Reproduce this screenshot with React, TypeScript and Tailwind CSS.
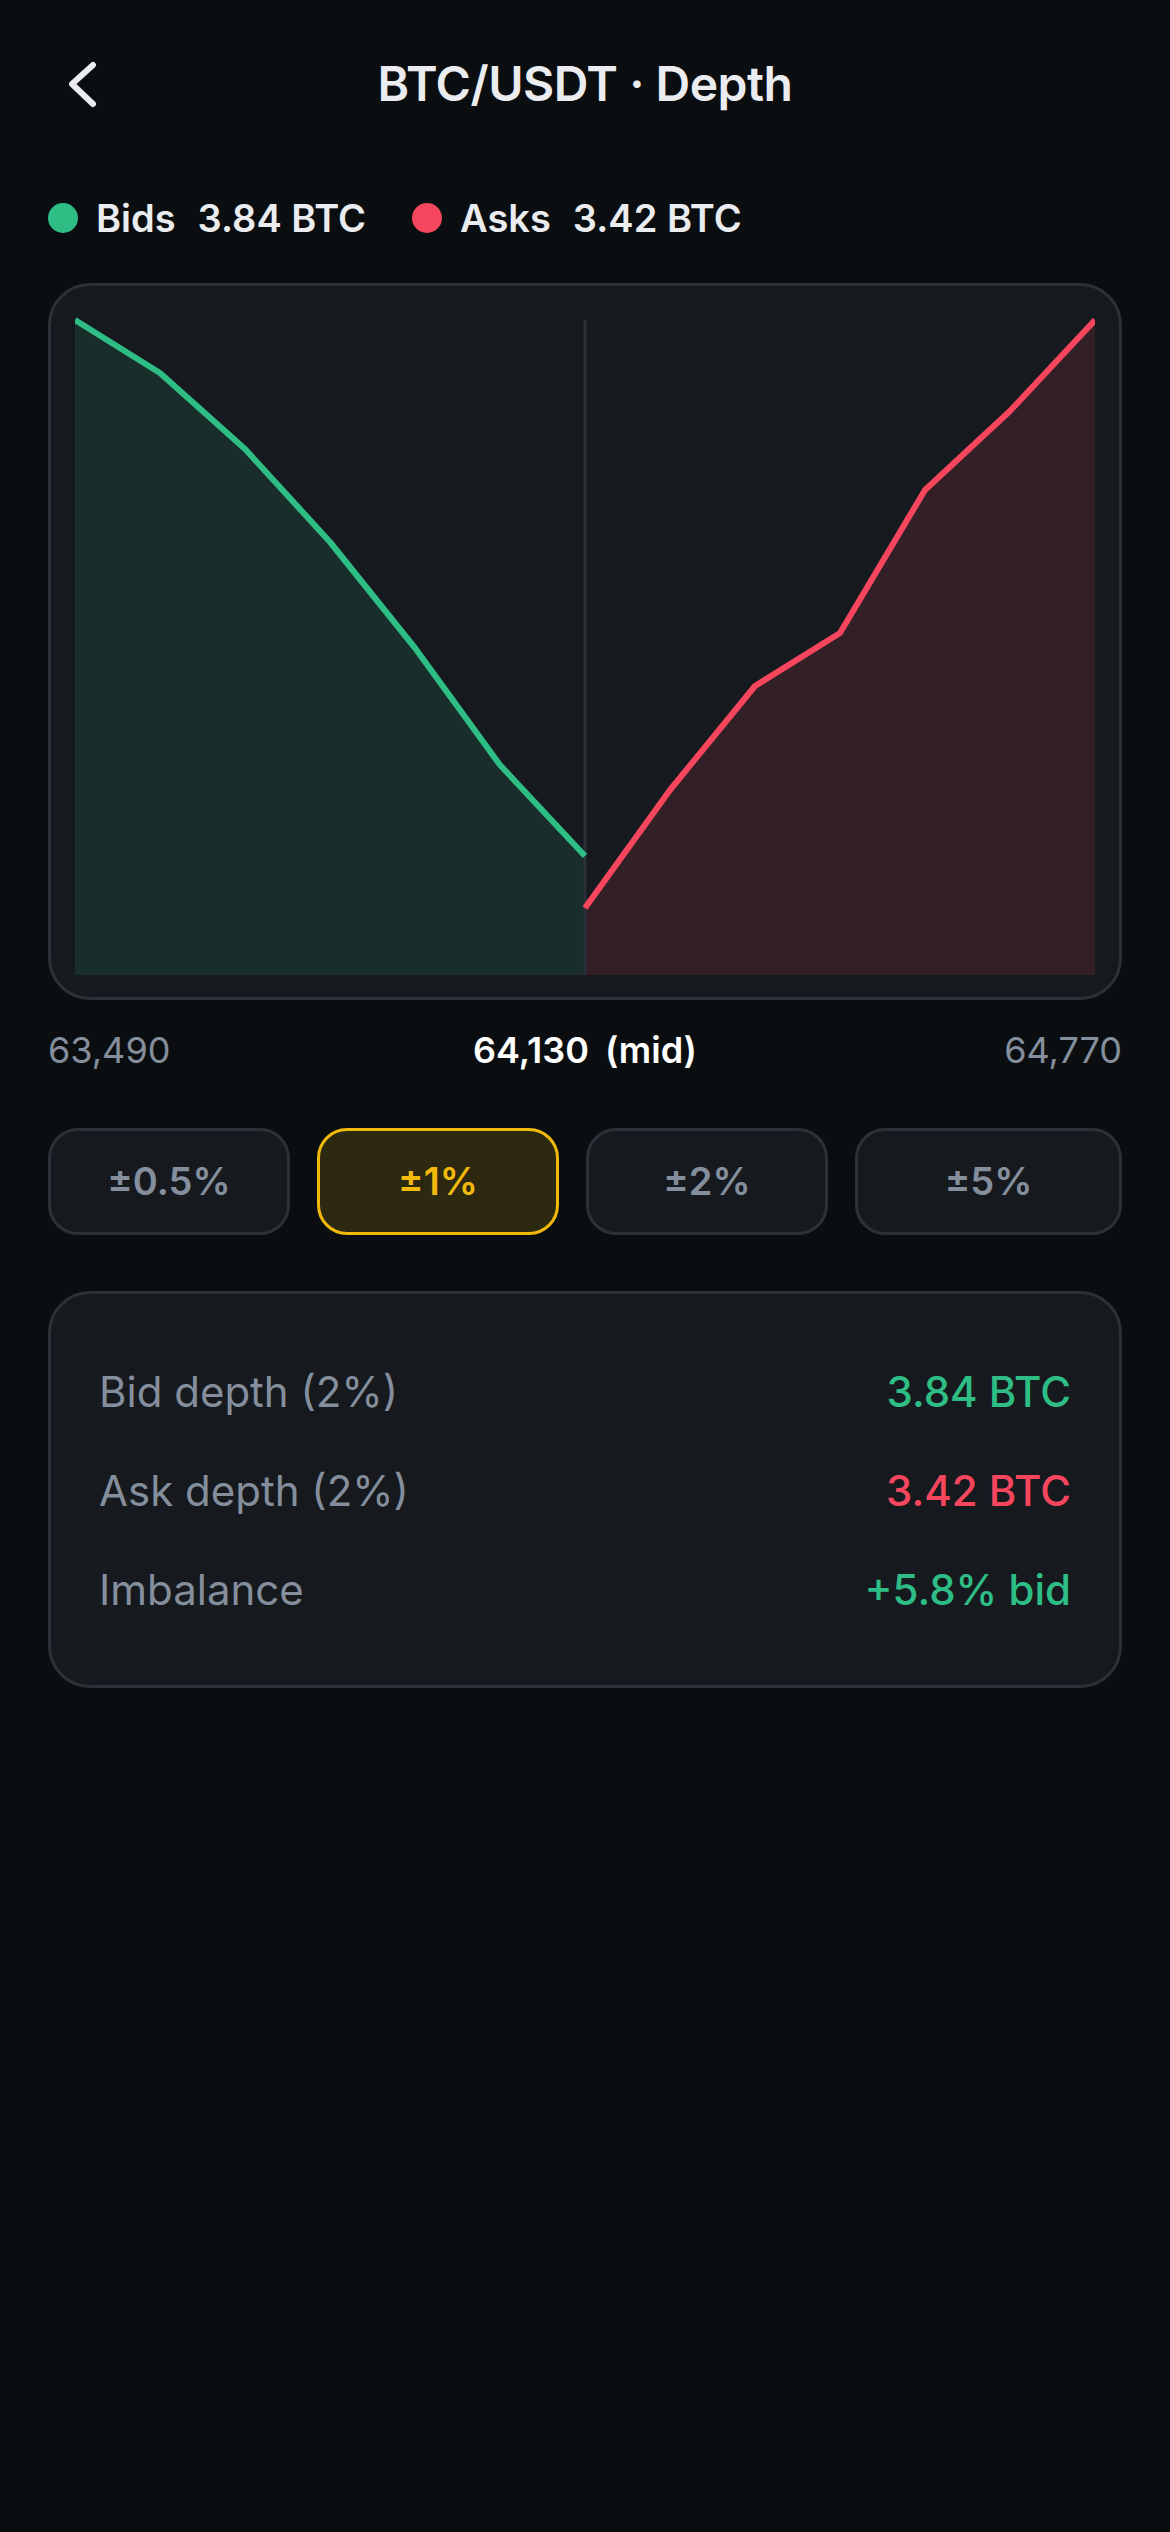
import { useState } from "react";

const BID = "#2ebd85";
const ASK = "#f6465d";

// chart points in svg px (1020 x 665), x step 85
const bids = [10, 63, 139, 232, 338, 455, 546];
const asks = [598, 480, 376, 323, 180, 101, 10];

const ranges = ["±0.5%", "±1%", "±2%", "±5%"];

export default function App() {
  const [range, setRange] = useState("±1%");

  const bidPts = bids.map((y, i) => `${i * 85},${y}`).join(" ");
  const askPts = asks.map((y, i) => `${510 + i * 85},${y}`).join(" ");

  return (
    <div className="min-h-[2532px] w-full bg-[#0b0e11] font-['Inter','Noto_Sans',sans-serif] text-[#eaecef]">
      {/* header */}
      <header className="grid h-[168px] grid-cols-[1fr_auto_1fr] items-center">
        <div className="pl-[66px]">
          <svg width="36" height="48" viewBox="0 0 36 48" fill="none">
            <path
              d="M27 5 L6 24 L27 44"
              stroke="#eaecef"
              strokeWidth="6"
              strokeLinecap="round"
              strokeLinejoin="round"
            />
          </svg>
        </div>
        <h1 className="text-[48px] font-semibold tracking-[-0.5px]">BTC/USDT · Depth</h1>
        <div />
      </header>

      {/* legend */}
      <div className="ml-[48px] mt-[26px] flex h-[48px] items-center gap-[46px] text-[38px] font-semibold">
        <Legend color="bg-[#2ebd85]" label="Bids" value="3.84 BTC" />
        <Legend color="bg-[#f6465d]" label="Asks" value="3.42 BTC" />
      </div>

      {/* chart */}
      <div className="mx-[48px] mt-[41px] h-[717px] rounded-[42px] border-[3px] border-[#2b3139] bg-[#161a1e] px-[24px] pb-[22px] pt-[24px]">
        <svg width="1020" height="665" viewBox="0 0 1020 665" className="block">
          <polygon points={`0,665 ${bidPts} 510,665`} fill={BID} fillOpacity="0.13" />
          <polygon points={`510,665 ${askPts} 1020,665`} fill={ASK} fillOpacity="0.13" />
          <line x1="510" y1="10" x2="510" y2="665" stroke="#2b3139" strokeWidth="3" />
          <polyline points={bidPts} fill="none" stroke={BID} strokeWidth="6" strokeLinejoin="round" />
          <polyline points={askPts} fill="none" stroke={ASK} strokeWidth="6" strokeLinejoin="round" />
        </svg>
      </div>

      {/* axis labels */}
      <div className="mx-[48px] mt-[23px] grid h-[48px] grid-cols-3 items-center text-[36px]">
        <span className="text-[#848e9c]">63,490</span>
        <span className="text-center font-semibold text-white">
          64,130<span className="ml-[16px]">(mid)</span>
        </span>
        <span className="text-right text-[#848e9c]">64,770</span>
      </div>

      {/* range buttons */}
      <div className="mx-[48px] mt-[57px] flex h-[107px] gap-[27px]">
        {ranges.map((r, i) => {
          const active = r === range;
          return (
            <button
              key={r}
              onClick={() => setRange(r)}
              className={`${i < 3 ? "w-[242px]" : "flex-1"} flex items-center justify-center rounded-[30px] border-[3px] text-[38px] font-semibold ${
                active
                  ? "border-[#f0b90b] bg-[#2d2810] text-[#f0b90b]"
                  : "border-[#2b3139] bg-[#161a1e] text-[#848e9c]"
              }`}
            >
              {r}
            </button>
          );
        })}
      </div>

      {/* stats */}
      <div className="mx-[48px] mt-[56px] rounded-[42px] border-[3px] border-[#2b3139] bg-[#161a1e] px-[48px] pb-[46px] pt-[48px] text-[42px]">
        <Row label="Bid depth (2%)" value="3.84 BTC" color="text-[#2ebd85]" />
        <Row label="Ask depth (2%)" value="3.42 BTC" color="text-[#f6465d]" />
        <Row label="Imbalance" value="+5.8% bid" color="text-[#2ebd85]" />
      </div>
    </div>
  );
}

function Legend({ color, label, value }: { color: string; label: string; value: string }) {
  return (
    <div className="flex items-center">
      <span className={`h-[30px] w-[30px] rounded-full ${color}`} />
      <span className="ml-[18px]">{label}</span>
      <span className="ml-[22px]">{value}</span>
    </div>
  );
}

function Row({ label, value, color }: { label: string; value: string; color: string }) {
  return (
    <div className="flex h-[99px] items-center justify-between">
      <span className="text-[#848e9c]">{label}</span>
      <span className={`font-medium ${color}`}>{value}</span>
    </div>
  );
}
